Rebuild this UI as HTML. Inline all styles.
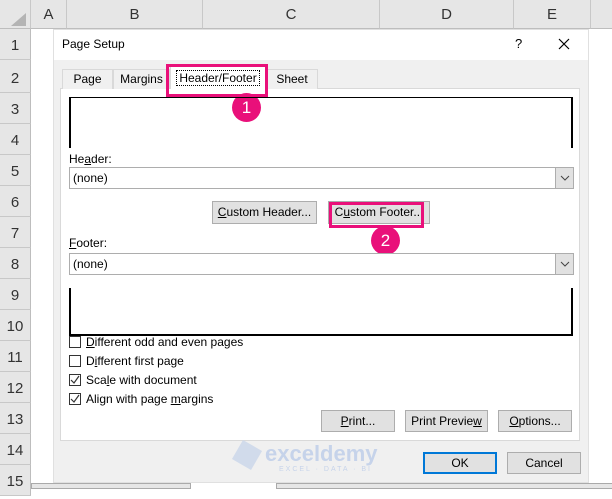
<!DOCTYPE html><html><head><style>
*{box-sizing:border-box;margin:0;padding:0}
body{width:612px;height:489px;overflow:hidden;background:#fff;font-family:"Liberation Sans",sans-serif;font-size:12px;color:#000;position:relative}
.a{position:absolute}
.ch{top:0;height:29px;background:#e6e6e6;border-right:1px solid #c8c8c8;border-bottom:1px solid #bdbdbd;text-align:center;line-height:29px;font-size:15px;color:#333}
.rh{left:0;width:31px;background:#e6e6e6;border-bottom:1px solid #c8c8c8;border-right:1px solid #bdbdbd;text-align:center;font-size:15px;color:#333}
.btn{position:absolute;background:#e1e1e1;border:1px solid #adadad;text-align:center;line-height:21px;font-size:12px}
.tab{position:absolute;top:69px;height:20px;border:1px solid #d9d9d9;border-bottom:none;background:#f0f0f0;text-align:center;line-height:19px}
.dd{position:absolute;left:69px;width:505px;height:22px;border:1px solid #adadad;background:#fff;line-height:20px;padding-left:3px}
.dd i{position:absolute;right:0;top:0;width:18px;height:20px;background:#e1e1e1;border-left:1px solid #adadad}
.cb{position:absolute;left:69px;width:12px;height:12px;border:1px solid #333;background:#fff}
.lb{position:absolute;left:86px}
.circ{position:absolute;width:29px;height:29px;border-radius:50%;background:#e9107a;color:#fff;text-align:center;line-height:29px;font-size:17px}
u{text-decoration:underline}
</style></head><body>
<div class="a ch" style="left:0;width:31px;background:#e6e6e6"></div>
<div class="a ch" style="left:31px;width:36px">A</div>
<div class="a ch" style="left:67px;width:136px">B</div>
<div class="a ch" style="left:203px;width:177px">C</div>
<div class="a ch" style="left:380px;width:134px">D</div>
<div class="a ch" style="left:514px;width:77px">E</div>
<div class="a ch" style="left:591px;width:30px"></div>
<div class="a" style="left:11px;top:13px;width:0;height:0;border-left:15px solid transparent;border-bottom:13px solid #b4b4b4"></div>
<div class="a rh" style="top:29px;height:31px;line-height:33px">1</div>
<div class="a rh" style="top:60px;height:33px;line-height:37px">2</div>
<div class="a rh" style="top:93px;height:31px;line-height:34px">3</div>
<div class="a rh" style="top:124px;height:31px;line-height:34px">4</div>
<div class="a rh" style="top:155px;height:31px;line-height:34px">5</div>
<div class="a rh" style="top:186px;height:31px;line-height:34px">6</div>
<div class="a rh" style="top:217px;height:31px;line-height:34px">7</div>
<div class="a rh" style="top:248px;height:31px;line-height:34px">8</div>
<div class="a rh" style="top:279px;height:31px;line-height:34px">9</div>
<div class="a rh" style="top:310px;height:31px;line-height:34px">10</div>
<div class="a rh" style="top:341px;height:31px;line-height:34px">11</div>
<div class="a rh" style="top:372px;height:31px;line-height:34px">12</div>
<div class="a rh" style="top:403px;height:31px;line-height:34px">13</div>
<div class="a rh" style="top:434px;height:31px;line-height:34px">14</div>
<div class="a rh" style="top:465px;height:31px;line-height:34px">15</div>
<div class="a" style="left:31px;top:483px;width:160px;height:6px;background:#e6e6e6;border:1px solid #aaa"></div>
<div class="a" style="left:276px;top:483px;width:340px;height:6px;background:#e6e6e6;border:1px solid #aaa"></div>

<div class="a" style="left:53px;top:29px;width:536px;height:454px;background:#f0f0f0;border:1px solid #e0e0e0"></div>
<div class="a" style="left:54px;top:30px;width:534px;height:30px;background:#fff"></div>
<div class="a" style="left:62px;top:37px;font-size:12px">Page Setup</div>
<div class="a" style="left:515px;top:36px;font-size:13px">?</div>
<svg class="a" style="left:558px;top:38px" width="12" height="12"><path d="M1 1 L11 11 M11 1 L1 11" stroke="#000" stroke-width="1.2"/></svg>

<div class="a" style="left:60px;top:88px;width:520px;height:353px;background:#fff;border:1px solid #d9d9d9"></div>
<div class="tab" style="left:62px;width:51px">Page</div>
<div class="tab" style="left:113px;width:57px">Margins</div>
<div class="tab" style="left:170px;top:65px;height:24px;width:96px;background:#fff;line-height:24px"><span style="border:1px dotted #000;padding:0 2px">Header/Footer</span></div>
<div class="tab" style="left:266px;width:52px">Sheet</div>
<div class="a" style="left:166px;top:64px;width:102px;height:33px;border:3px solid #e9107a"></div>
<div class="circ" style="left:232px;top:93px">1</div>

<div class="a" style="left:69px;top:97px;width:504px;height:51px;border-top:1px solid #000;border-left:2px solid #000;border-right:2px solid #000"></div>
<div class="a" style="left:69px;top:152px">He<u>a</u>der:</div>
<div class="dd" style="top:167px">(none)<i><svg width="18" height="20" style="position:absolute;left:0;top:0"><path d="M5 8 L9 12 L13 8" stroke="#444" fill="none"/></svg></i></div>
<div class="btn" style="left:212px;top:201px;width:105px;height:23px"><u>C</u>ustom Header...</div>
<div class="btn" style="left:328px;top:201px;width:102px;height:23px">C<u>u</u>stom Footer...</div>
<div class="a" style="left:329px;top:202px;width:95px;height:26px;border:3px solid #e9107a"></div>
<div class="circ" style="left:371px;top:226px">2</div>
<div class="a" style="left:69px;top:236px"><u>F</u>ooter:</div>
<div class="dd" style="top:253px">(none)<i><svg width="18" height="20" style="position:absolute;left:0;top:0"><path d="M5 8 L9 12 L13 8" stroke="#444" fill="none"/></svg></i></div>
<div class="a" style="left:69px;top:288px;width:504px;height:48px;border-bottom:2px solid #000;border-left:2px solid #000;border-right:2px solid #000"></div>

<div class="cb" style="top:336px"></div><div class="lb" style="top:335px"><u>D</u>ifferent odd and even pages</div>
<div class="cb" style="top:355px"></div><div class="lb" style="top:354px">D<u>i</u>fferent first page</div>
<div class="cb" style="top:374px"><svg width="10" height="10" style="position:absolute;left:0;top:0"><path d="M1 5 L4 8 L9 1" stroke="#333" fill="none" stroke-width="1.2"/></svg></div><div class="lb" style="top:373px">Sca<u>l</u>e with document</div>
<div class="cb" style="top:393px"><svg width="10" height="10" style="position:absolute;left:0;top:0"><path d="M1 5 L4 8 L9 1" stroke="#333" fill="none" stroke-width="1.2"/></svg></div><div class="lb" style="top:392px">Align with page <u>m</u>argins</div>

<div class="btn" style="left:321px;top:410px;width:74px;height:22px"><u>P</u>rint...</div>
<div class="btn" style="left:405px;top:410px;width:83px;height:22px">Print Previe<u>w</u></div>
<div class="btn" style="left:498px;top:410px;width:74px;height:22px"><u>O</u>ptions...</div>

<div class="a" style="left:236px;top:444px;width:22px;height:22px;background:#c9d6ea;transform:rotate(30deg);opacity:.8"></div>
<div class="a" style="left:265px;top:441px;font-size:22px;font-weight:bold;color:#c6d3ea">exceldemy</div>
<div class="a" style="left:279px;top:466px;font-size:7px;color:#c6d3ea;letter-spacing:2px">EXCEL · DATA · BI</div>

<div class="btn" style="left:423px;top:452px;width:74px;height:22px;border:2px solid #0078d7;line-height:18px">OK</div>
<div class="btn" style="left:507px;top:452px;width:74px;height:22px">Cancel</div>
</body></html>
